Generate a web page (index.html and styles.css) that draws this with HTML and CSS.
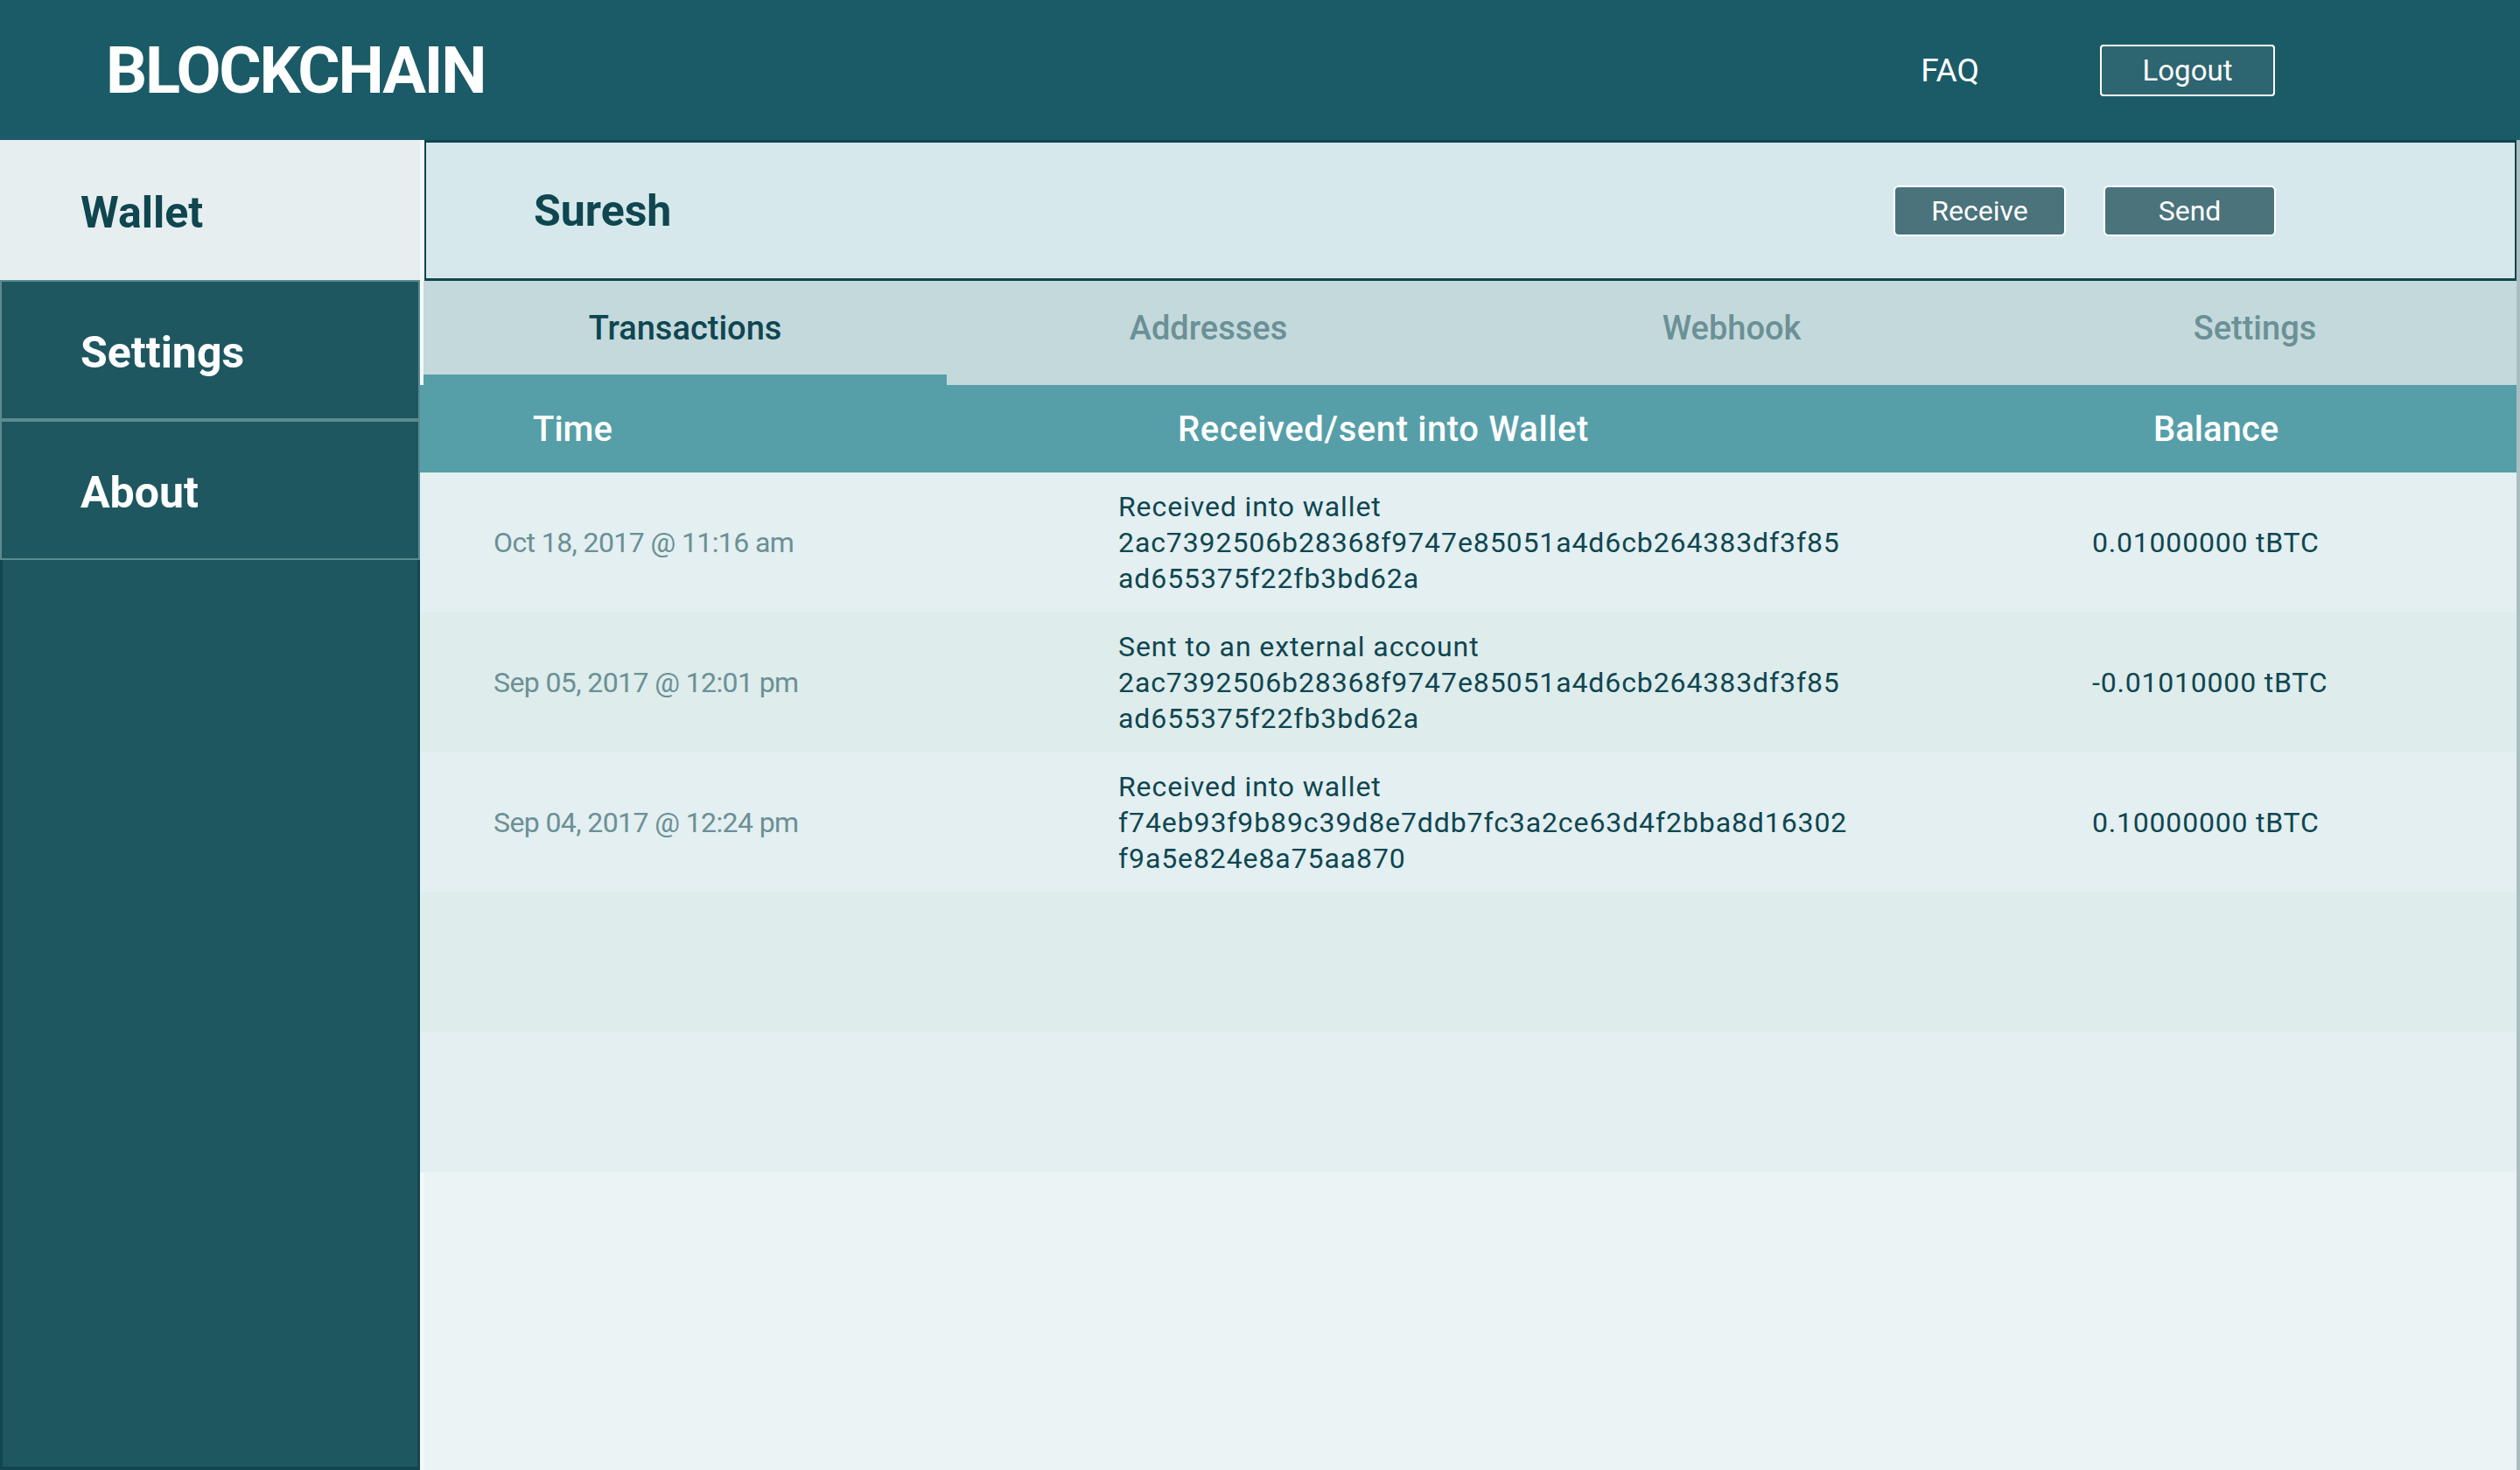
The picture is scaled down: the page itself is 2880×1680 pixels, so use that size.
FILE: index.html
```html
<!DOCTYPE html>
<html lang="en">
<head>
<meta charset="utf-8">
<title>Blockchain Wallet</title>
<link rel="stylesheet" href="styles.css">
</head>
<body>
<header class="topbar">
  <h1 class="logo">BLOCKCHAIN</h1>
  <a class="faq" href="#">FAQ</a>
  <button class="btn btn-logout">Logout</button>
</header>
<div class="layout">
  <aside class="sidebar">
    <a class="side-item active" href="#">Wallet</a>
    <a class="side-item" href="#">Settings</a>
    <a class="side-item" href="#">About</a>
    <div class="side-fill"></div>
  </aside>
  <main class="main">
    <section class="wallet-card">
      <h2 class="wallet-name">Suresh</h2>
      <div class="actions">
        <button class="btn btn-action">Receive</button>
        <button class="btn btn-action">Send</button>
      </div>
    </section>
    <nav class="tabs">
      <a class="tab active" href="#">Transactions</a>
      <a class="tab" href="#">Addresses</a>
      <a class="tab" href="#">Webhook</a>
      <a class="tab" href="#">Settings</a>
    </nav>
    <div class="table">
      <div class="thead">
        <div class="th th-time">Time</div>
        <div class="th th-desc">Received/sent into Wallet</div>
        <div class="th th-bal">Balance</div>
      </div>
      <div class="tr">
        <div class="td td-time">Oct 18, 2017 @ 11:16 am</div>
        <div class="td td-desc">Received into wallet<br>2ac7392506b28368f9747e85051a4d6cb264383df3f85<br>ad655375f22fb3bd62a</div>
        <div class="td td-bal">0.01000000 tBTC</div>
      </div>
      <div class="tr">
        <div class="td td-time">Sep 05, 2017 @ 12:01 pm</div>
        <div class="td td-desc">Sent to an external account<br>2ac7392506b28368f9747e85051a4d6cb264383df3f85<br>ad655375f22fb3bd62a</div>
        <div class="td td-bal">-0.01010000 tBTC</div>
      </div>
      <div class="tr">
        <div class="td td-time">Sep 04, 2017 @ 12:24 pm</div>
        <div class="td td-desc">Received into wallet<br>f74eb93f9b89c39d8e7ddb7fc3a2ce63d4f2bba8d16302<br>f9a5e824e8a75aa870</div>
        <div class="td td-bal">0.10000000 tBTC</div>
      </div>
      <div class="tr"></div>
      <div class="tr"></div>
      <div class="table-rest"></div>
    </div>
  </main>
</div>
</body>
</html>
```
FILE: styles.css
```css
* { box-sizing: border-box; }

html, body {
  margin: 0;
  padding: 0;
}

body {
  width: 2880px;
  height: 1680px;
  overflow: hidden;
  font-family: Roboto, "Liberation Sans", sans-serif;
  background: #f3f8f9;
  color: #0f4650;
}

/* ---------- top bar ---------- */
.topbar {
  height: 160px;
  background: #1b5b67;
  display: flex;
  align-items: center;
  padding: 0 280px 0 121px;
}

.logo {
  flex: 1;
  margin: 0;
  font-size: 74px;
  font-weight: 700;
  letter-spacing: -2.2px;
  color: #ffffff;
}

.faq {
  color: #ffffff;
  text-decoration: none;
  font-size: 37px;
  margin-right: 138px;
}

.btn {
  font-family: inherit;
  color: #ffffff;
  border: 2px solid #ffffff;
  cursor: pointer;
}

.btn-logout {
  width: 200px;
  height: 59px;
  border-radius: 4px;
  background: #2d6570;
  font-size: 33px;
}

/* ---------- layout ---------- */
.layout {
  display: flex;
  height: 1520px;
}

.sidebar {
  width: 480px;
  flex: none;
  display: flex;
  flex-direction: column;
}

.side-item {
  height: 160px;
  display: flex;
  align-items: center;
  padding-left: 90px;
  padding-top: 6px;
  font-size: 50px;
  font-weight: 700;
  color: #ffffff;
  text-decoration: none;
  background: #1e5760;
  border: 2px solid #5c8a8f;
}

.side-item.active {
  background: #e6eef0;
  border-color: #e6eef0;
  color: #0f4650;
}

.side-fill {
  flex: 1;
  background: #1e5760;
  border-left: 3px solid #134750;
  border-right: 3px solid #134750;
  border-bottom: 4px solid #134750;
}

.main {
  flex: 1;
  display: flex;
  flex-direction: column;
  border-right: 4px solid #a9bec1;
}

/* ---------- wallet card ---------- */
.wallet-card {
  height: 161px;
  margin-left: 5px;
  display: flex;
  align-items: center;
  justify-content: space-between;
  padding: 0 273px 0 123px;
  background: #d6e8eb;
  border: 2px solid #0f4650;
  border-top-width: 3px;
  border-bottom-width: 3px;
}

.wallet-name {
  margin: 0;
  font-size: 50px;
  font-weight: 700;
  color: #0f4650;
}

.actions {
  display: flex;
  gap: 43px;
}

.btn-action {
  width: 197px;
  height: 58px;
  border-radius: 6px;
  background: #4a737c;
  font-size: 32px;
}

/* ---------- tabs ---------- */
.tabs {
  margin-left: 4px;
  height: 119px;
  display: grid;
  grid-template-columns: repeat(4, 1fr);
  background: #c3d9dc;
}

.tab {
  display: flex;
  align-items: center;
  justify-content: center;
  font-size: 38px;
  font-weight: 500;
  color: #6b9095;
  text-decoration: none;
  border-bottom: 12px solid transparent;
}

.tab.active {
  color: #0f4650;
  border-bottom-color: #569fa9;
}

/* ---------- table ---------- */
.table {
  flex: 1;
  display: flex;
  flex-direction: column;
}

.thead,
.tr {
  display: grid;
  grid-template-columns: 798px 1113px 1fr;
}

.thead {
  height: 100px;
  background: #569fa9;
  align-items: center;
}

.th {
  font-size: 40px;
  font-weight: 500;
  color: #ffffff;
}

.th-time { padding-left: 129px; }
.th-desc { padding-left: 68px; letter-spacing: 0.6px; }
.th-bal  { padding-left: 70px; }

.tr {
  height: 160px;
  align-items: center;
  background: #e3eff1;
}

.tr:nth-child(odd) {
  background: #deecec;
}

.td {
  font-size: 32px;
  line-height: 41px;
  color: #0f4650;
}

.td-desc {
  letter-spacing: 0.9px;
}

.td-bal {
  letter-spacing: 0.8px;
}

.td-time {
  padding-left: 84px;
  color: #6b9095;
  letter-spacing: -0.6px;
}

.table-rest {
  flex: 1;
  margin-left: 5px;
  background: #ebf4f5;
}
```
